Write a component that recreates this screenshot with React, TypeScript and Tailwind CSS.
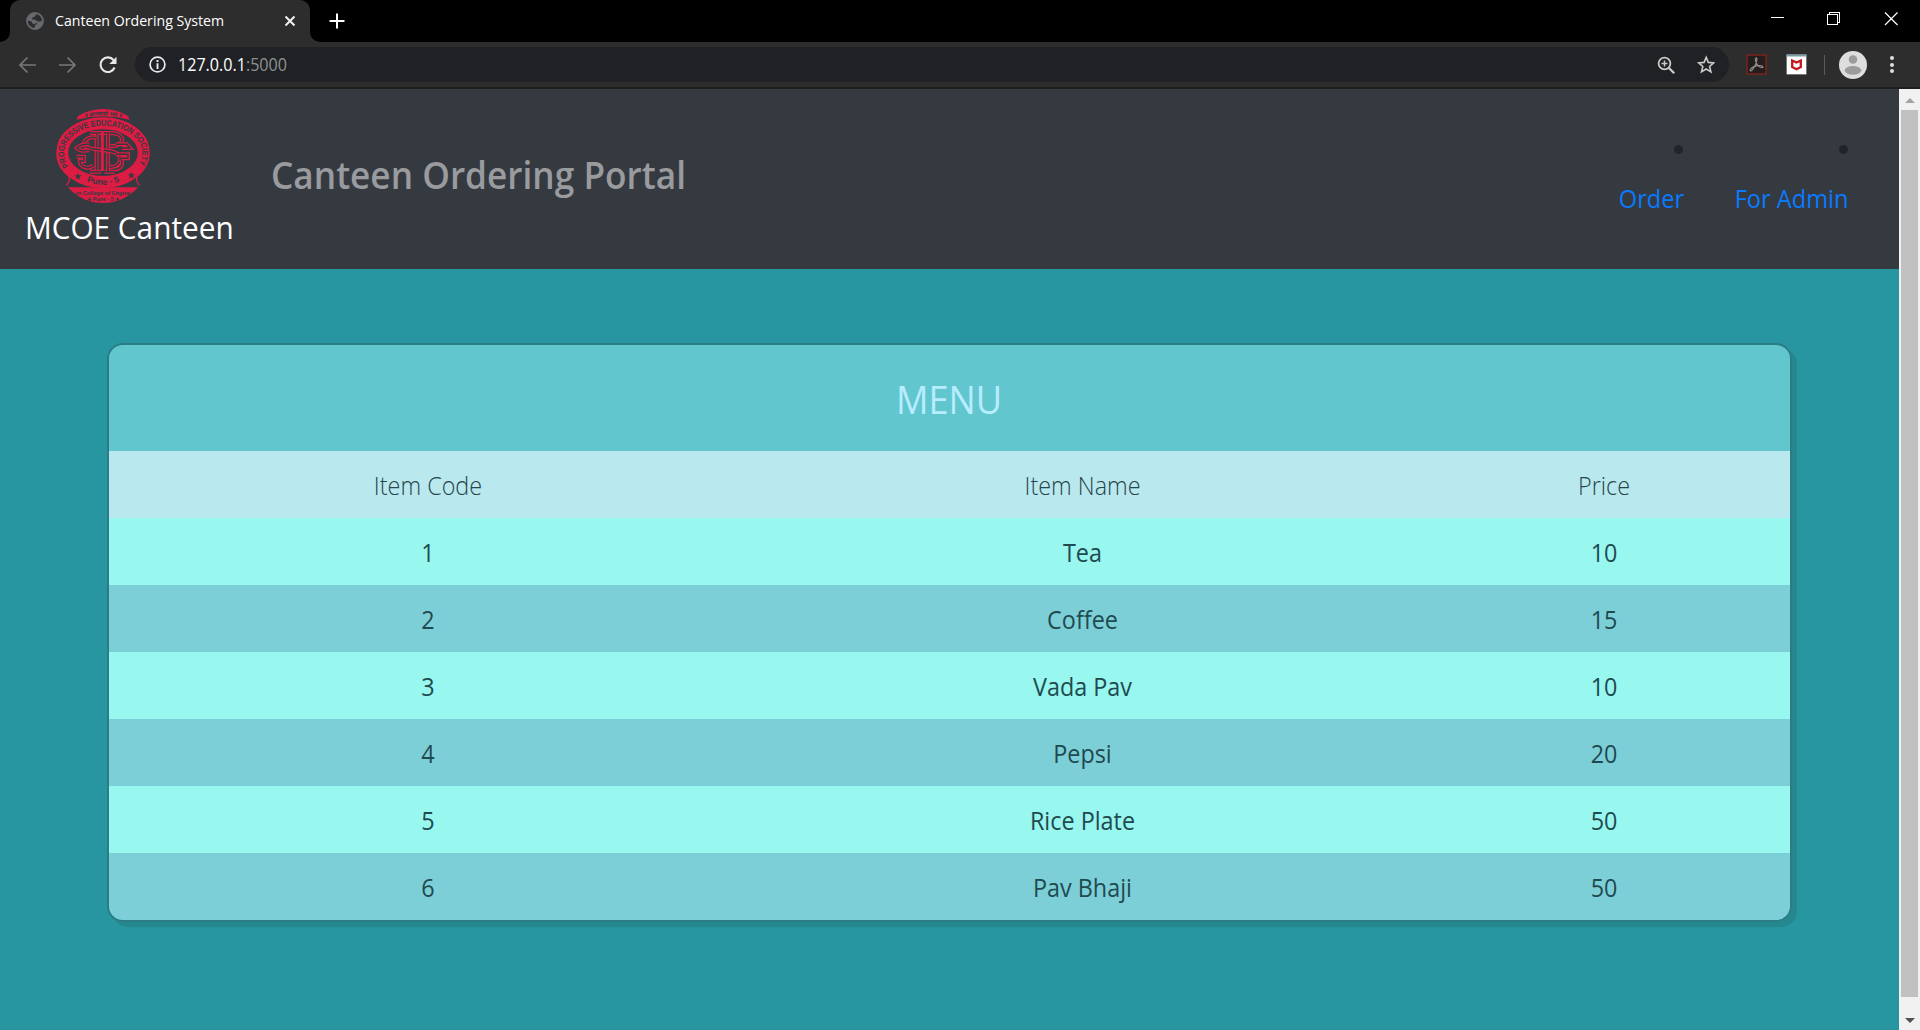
import { ReactNode } from "react";

const items = [
  { code: 1, name: "Tea", price: 10 },
  { code: 2, name: "Coffee", price: 15 },
  { code: 3, name: "Vada Pav", price: 10 },
  { code: 4, name: "Pepsi", price: 20 },
  { code: 5, name: "Rice Plate", price: 50 },
  { code: 6, name: "Pav Bhaji", price: 50 },
];

function Globe() {
  return (
    <svg width="18" height="18" viewBox="0 0 18 18">
      <circle cx="9" cy="9" r="8" fill="none" stroke="#666a6f" strokeWidth="1.800" />
      <path d="M2 4.500 6 1.500 10.500 1.500 9 4.500 6.500 5.500 6 7.500 9.500 7.800 11.500 9.500 14.500 9.500 16.500 8 16 12.500 12 16.200 8.500 16.500 9 13.500 11 12 10 10.500 8.500 12.500 6.500 11.500 5.500 9.500 1.500 8.500Z" fill="#666a6f" />
    </svg>
  );
}

function TabStrip() {
  return (
    <div className="flex h-[42px] bg-black">
      <div className="flex h-full w-2.5 items-end bg-[#2d2d2d]">
        <div className="h-full w-full rounded-br-[10px] bg-black" />
      </div>
      <div className="flex h-full w-[300px] items-center rounded-t-[10px] bg-[#2d2d2d] pl-4">
        <Globe />
        <span className="ml-[11px] w-[229px] origin-left scale-x-[0.943] whitespace-nowrap pb-0.5 text-[15px] text-white">Canteen Ordering System</span>
        <svg className="shrink-0" width="12" height="12" viewBox="0 0 12 12" stroke="#f1f1f1" strokeWidth="2">
          <path d="M1.500 1.500 10.500 10.500M10.500 1.500 1.500 10.500" />
        </svg>
      </div>
      <div className="h-full w-2.5 bg-[#2d2d2d]">
        <div className="h-full w-full rounded-bl-[10px] bg-black" />
      </div>
      <svg className="ml-[9px] mt-[13px]" width="16" height="16" viewBox="0 0 16 16" stroke="#fff" strokeWidth="2">
        <path d="M8 .5V15.500M.5 8H15.500" />
      </svg>
      <div className="ml-auto flex pt-3">
        <svg width="150" height="14" viewBox="0 0 150 14" fill="none" stroke="#fff" shapeRendering="crispEdges">
          <path d="M1 5.500H14M57.500 2.500H67.500V12.500H57.500ZM59.500 2.500V.5H69.500V10.500H67.500" />
          <path d="M115 .5 127.500 13M127.500 .5 115 13" shapeRendering="auto" strokeWidth="1.200" />
        </svg>
      </div>
    </div>
  );
}

function Toolbar() {
  return (
    <div className="flex h-[47px] items-center border-b-2 border-[#1e1e1e] bg-[#2d2d2d]">
      <svg className="ml-[19px]" width="98" height="18" viewBox="0 0 98 18" fill="none" strokeWidth="1.700">
        <path d="M17 9H1.500M8.500 1.500 1 9 8.500 16.500M40 9H56M48.500 1.500 56 9 48.500 16.500" stroke="#77787a" />
        <path d="M94.600 4.200A7.300 7.300 0 1 0 95.600 11.500" stroke="#e8e8e8" strokeWidth="2.100" />
        <path d="M97.500 .8V8H90.300Z" fill="#e8e8e8" />
      </svg>
      <div className="ml-[18px] flex h-[35px] w-[1594px] items-center rounded-full bg-[#202124] pl-3.5">
        <svg width="17" height="17" viewBox="0 0 17 17">
          <circle cx="8.500" cy="8.500" r="7.400" fill="none" stroke="#e8eaed" strokeWidth="1.700" />
          <path d="M8.500 4V5.900M8.500 7.300V13" stroke="#e8eaed" strokeWidth="1.900" />
        </svg>
        <span className="ml-3 origin-left scale-x-[0.92] whitespace-nowrap text-[17.500px] text-white">
          127.0.0.1<span className="text-[#8f9194]">:5000</span>
        </span>
        <svg className="ml-auto mr-3.5" width="58" height="20" viewBox="0 0 58 20" fill="none" stroke="#c9cacc" strokeWidth="1.800">
          <circle cx="7.500" cy="8.500" r="5.900" />
          <path d="M11.700 12.700 17.200 18.200" strokeWidth="2.300" />
          <path d="M4.500 8.500H10.500M7.500 5.500V11.500" strokeWidth="1.500" />
          <path d="M49.200 2.300 51.300 7.400 56.700 7.900 52.600 11.500 53.900 16.900 49.200 14 44.500 16.900 45.800 11.500 41.700 7.900 47.100 7.400Z" strokeWidth="1.600" />
        </svg>
      </div>
      <svg className="ml-[17px]" width="21" height="21" viewBox="0 0 21 21" fill="none">
        <rect x="1" y="1" width="19" height="19" fill="#251d1d" stroke="#74261d" strokeWidth="1.600" />
        <path d="M10 4C8.500 4.500 10 9 12 11.500S17.500 14 17 12.700 12 11 8 12.600 3.500 16.500 4.800 16.800 10.500 10 10.800 6.500 10.300 4 10 4Z" stroke="#8c8c8c" strokeWidth="1.200" />
      </svg>
      <svg className="ml-[19px]" width="21" height="21" viewBox="0 0 21 21">
        <rect x=".5" y=".5" width="20" height="20" rx="1" fill="#fff" stroke="#777" />
        <path d="M.5.500H20.500V2.500H.5Z" fill="#7d99a5" />
        <path d="M6.200 6.500 10.500 8.500 14.800 6.500V13L10.500 15.200 6.200 13Z" fill="none" stroke="#c4161c" strokeWidth="2.300" />
      </svg>
      <div className="ml-[17px] h-5 w-px bg-[#5b5b5b]" />
      <svg className="ml-3.5" width="28" height="28" viewBox="0 0 28 28">
        <circle cx="14" cy="14" r="14" fill="#dedede" />
        <circle cx="14" cy="8.500" r="4.300" fill="#9c9c9c" />
        <ellipse cx="14" cy="19.300" rx="8.300" ry="4.400" fill="#9c9c9c" />
      </svg>
      <div className="ml-[23px] flex flex-col gap-[2.500px]">
        <div className="size-[4px] rounded-full bg-[#dedede]" />
        <div className="size-[4px] rounded-full bg-[#dedede]" />
        <div className="size-[4px] rounded-full bg-[#dedede]" />
      </div>
    </div>
  );
}

const letterOutlines = [
  "M102 72H160C192 72 204 86 196 100C188 114 166 112 156 112",
  "M122 74V184M102 188H136M156 72V188M146 188H176",
  "M122 86C92 80 78 100 88 112C100 126 178 118 190 140C200 162 180 176 160 174",
  "M100 106C84 104 74 106 62 117C74 128 86 126 100 124",
  "M180 106H212L222 117H198M180 136H216V148H196",
  "M62 143H84V156H72C72 176 96 182 112 170M196 152C204 168 190 184 172 180",
];

function Crest() {
  return (
    <svg width="94" height="94" viewBox="0 0 282 282">
      <defs>
        <clipPath id="disc"><circle cx="141" cy="141" r="141" /></clipPath>
        <path id="upper" d="M38 171A117 82 0 1 1 244 171" />
        <path id="lower" d="M60 203Q141 252 222 203" />
        <path id="ribbon" d="M62 31Q141 8 222 31" />
      </defs>
      <g clipPath="url(#disc)">
        <path d="M70 8Q141 -12 214 8L220 32Q141 12 62 32Z" fill="#dc1c43" />
        <ellipse cx="141" cy="131" rx="122.500" ry="88" fill="none" stroke="#dc1c43" strokeWidth="36" />
        <path d="M30 235H252L220 282H62Z" fill="#dc1c43" />
        <path d="M38 195Q46 215 30 230M244 195Q236 215 252 230" fill="none" stroke="#dc1c43" strokeWidth="4" />
        {letterOutlines.map((d) => (
          <g key={d} fill="none">
            <path d={d} stroke="#dc1c43" strokeWidth="12" />
            <path d={d} stroke="#353a41" strokeWidth="4.500" />
          </g>
        ))}
        <path d="M139 66V186" stroke="#dc1c43" strokeWidth="9" />
        <path d="M66 191 69 199 77 199 71 204 73 212 66 207 59 212 61 204 55 199 63 199ZM226 188 229 196 237 196 231 201 233 209 226 204 219 209 221 201 215 196 223 196Z" fill="#353a41" />
        <g fill="#353a41" fontFamily="Liberation Sans" fontWeight="700">
          <text fontSize="25"><textPath href="#upper" textLength="392" lengthAdjust="spacingAndGlyphs">PROGRESSIVE EDUCATION SOCIETY</textPath></text>
          <text fontSize="26"><textPath href="#lower" startOffset="50%" textAnchor="middle">Pune - 5</textPath></text>
          <text fontSize="17" fontFamily="Noto Sans"><textPath href="#ribbon" startOffset="50%" textAnchor="middle">॥ ज्ञानमयो भव ॥</textPath></text>
          <text x="141" y="259" fontSize="17" textAnchor="middle">rn College of Engine</text>
          <text x="141" y="277" fontSize="16" textAnchor="middle">★ Pune - 5 ★</text>
        </g>
      </g>
    </svg>
  );
}

function NavLink({ children, className }: { children: ReactNode; className: string }) {
  return (
    <div className={"flex flex-col items-end " + className}>
      <div className="mr-[1px] size-[9px] rounded-full bg-[#212529]" />
      <a className="mt-[26px] block origin-right scale-x-[0.945] whitespace-nowrap text-[25px] leading-[36px] text-[#087aff]">{children}</a>
    </div>
  );
}

function Header() {
  return (
    <header className="flex h-[180px] bg-[#353a41]">
      <div className="w-[271px] pt-5">
        <div className="pl-14"><Crest /></div>
        <div className="mt-0.5 origin-left scale-x-[0.976] whitespace-nowrap pl-[25.500px] text-[30.500px] leading-[44px] text-white">MCOE Canteen</div>
      </div>
      <h1 className="mt-[59px] h-[54px] origin-left scale-x-[0.952] whitespace-nowrap text-[37px] font-semibold leading-[54px] text-[#999b9e]">Canteen Ordering Portal</h1>
      <nav className="ml-auto flex pt-14 pr-[50px]">
        <NavLink className="mr-[50px] w-[65px]">Order</NavLink>
        <NavLink className="w-[115px]">For Admin</NavLink>
      </nav>
    </header>
  );
}

const columns = "grid h-[67px] grid-cols-[638px_671px_372px] items-center pt-[3px] text-center text-[25px]";

function Cell({ children }: { children: ReactNode }) {
  return <span className="origin-center scale-x-[0.935]">{children}</span>;
}

function MenuCard() {
  return (
    <section className="ml-[107px] mt-[74px] w-[1685px] overflow-hidden rounded-[16px] border-2 border-[#2c7c84] shadow-[5px_5px_0_#26888f]">
      <h2 className="flex h-[106px] items-center justify-center bg-[#62c6cf] pt-1 text-[37.500px] text-[#b8ecff]">
        <span className="scale-x-[0.965]">MENU</span>
      </h2>
      <div className={columns + " bg-[#b9e8ee] font-light text-[#28454a]"}>
        <Cell>Item Code</Cell><Cell>Item Name</Cell><Cell>Price</Cell>
      </div>
      {items.map((item) => (
        <div key={item.code} className={columns + " text-[#1f4a50] " + (item.code % 2 ? "bg-[#98f7ee]" : "bg-[#7dcfd7]")}>
          <Cell>{item.code}</Cell><Cell>{item.name}</Cell><Cell>{item.price}</Cell>
        </div>
      ))}
    </section>
  );
}

function Scrollbar() {
  return (
    <div className="flex w-[21px] flex-col items-center bg-[#f1f1f1]">
      <div className="flex h-[21px] items-center pt-0.5"><div className="border-x-[5px] border-b-[5px] border-x-transparent border-b-[#a3a3a3]" /></div>
      <div className="h-[887px] w-[17px] bg-[#c1c1c1]" />
      <div className="mt-[21px] border-x-[5px] border-t-[5px] border-x-transparent border-t-[#505050]" />
    </div>
  );
}

export default function App() {
  return (
    <div className="flex h-[1030px] w-[1920px] flex-col overflow-hidden font-['Open_Sans',sans-serif]">
      <TabStrip />
      <Toolbar />
      <div className="flex grow">
        <main className="w-[1899px] bg-[#2896a1]">
          <Header />
          <MenuCard />
        </main>
        <Scrollbar />
      </div>
    </div>
  );
}
